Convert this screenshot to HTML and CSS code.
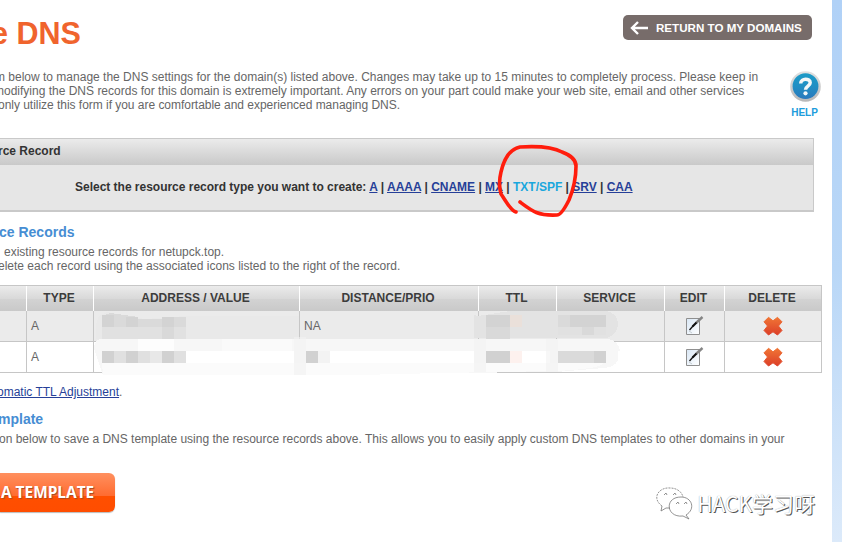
FILE: index.html
```html
<!DOCTYPE html>
<html lang="en">
<head>
<meta charset="utf-8">
<title>Manage DNS</title>
<link rel="stylesheet" href="styles.css">
</head>
<body>
<main class="page">
  <header class="top">
    <h1>e DNS</h1>
    <a class="return"><svg width="20" height="14" viewBox="0 0 20 14"><path d="M9 1L3 7l6 6M2.500 7H19" fill="none" stroke="#fff" stroke-width="2.400"/></svg><span>RETURN TO MY DOMAINS</span></a>
  </header>
  <section class="intro">
    <div class="copy">
      <p class="l1">m below to manage the DNS settings for the domain(s) listed above. Changes may take up to 15 minutes to completely process. Please keep in</p>
      <p class="l2">modifying the DNS records for this domain is extremely important. Any errors on your part could make your web site, email and other services</p>
      <p class="l3">only utilize this form if you are comfortable and experienced managing DNS.</p>
    </div>
    <a class="help">
      <svg width="32" height="32" viewBox="0 0 32 32"><defs><linearGradient id="hb" x2="0" y2="1"><stop stop-color="#1c9bc7"/><stop offset=".5" stop-color="#218fc4"/><stop offset="1" stop-color="#2b79bd"/></linearGradient><linearGradient id="hr" x2="0" y2="1"><stop stop-color="#e2e2e2"/><stop offset="1" stop-color="#b8b8b8"/></linearGradient></defs><circle cx="16.500" cy="15.500" r="15.300" fill="url(#hr)"/><circle cx="16.500" cy="15.200" r="12.900" fill="url(#hb)"/><path d="M11.700 12.500C11.800 6.700 21.200 6.900 21.200 11.800C21.200 15.200 16.500 15 16.500 18.700" fill="none" stroke="#f4f7f8" stroke-width="3.500"/><circle cx="16.500" cy="22.300" r="2.100" fill="#f4f7f8"/></svg>
      <span>HELP</span>
    </a>
  </section>
  <section class="panel">
    <h2>rce Record</h2>
    <div class="types">Select the resource record type you want to create: <a>A</a> | <a>AAAA</a> | <a>CNAME</a> | <a>MX</a> | <b>TXT/SPF</b> | <a>SRV</a> | <a>CAA</a></div>
    <svg class="circle" width="90" height="80" viewBox="0 0 90 80"><path d="M21 70C15 68 11 59 6 52C4 45 4 38 6 30C9 17 15 7 25 5C42 4 58 5 67 10C75 13 81 17 81 24C81 36 79 46 74 58C69 68 65 73 62 73C43 74 37 69 25 60" fill="none" stroke="#ff1d0d" stroke-width="3.600" stroke-linecap="round" stroke-linejoin="round"/></svg>
  </section>
  <section class="records">
    <h3>ce Records</h3>
    <p class="r1">existing resource records for netupck.top.</p>
    <p class="r2">elete each record using the associated icons listed to the right of the record.</p>
  </section>
  <div class="tablewrap">
    <table>
      <colgroup><col class="c0"><col class="c1"><col class="c2"><col class="c3"><col class="c4"><col class="c5"><col class="c6"><col class="c7"></colgroup>
      <thead><tr><th></th><th>TYPE</th><th>ADDRESS / VALUE</th><th>DISTANCE/PRIO</th><th>TTL</th><th>SERVICE</th><th>EDIT</th><th>DELETE</th></tr></thead>
      <tbody>
        <tr><td></td><td>A</td><td></td><td>NA</td><td></td><td></td>
          <td class="ico"><svg width="20" height="20" viewBox="0 0 20 20"><defs><linearGradient id="pg" x2="1" y2="1"><stop stop-color="#d9e7f5"/><stop offset="1" stop-color="#fff"/></linearGradient><g id="edit"><path d="M1.500 2.500h13v16h-13z" fill="url(#pg)" stroke="#8f8f8f"/><path d="M4 15l3 2" stroke="#c3cbd1" fill="none"/><path d="M4.500 14L8 10" stroke="#111" stroke-width="1.300"/><path d="M7.500 10.500L12 6" stroke="#111" stroke-width="2.200"/><path d="M11.500 6.500L17.500 1" stroke="#858585" stroke-width="2.400"/></g></defs><use href="#edit"/></svg></td>
          <td class="ico"><svg width="20" height="20" viewBox="0 0 20 20"><defs><linearGradient id="xg" x2="0" y2="1"><stop stop-color="#f07535"/><stop offset="1" stop-color="#dc3f28"/></linearGradient><path id="del" d="M5.500 1.300L10 4.800L14.500 1.300L19 5.800L15.500 10L19 14.500L14.500 19L10 15.800L5.500 19L1 14.500L4.500 10L1 5.800Z" fill="url(#xg)" stroke="url(#xg)" stroke-linejoin="round"/></defs><use href="#del"/></svg></td></tr>
        <tr><td></td><td>A</td><td></td><td></td><td></td><td></td>
          <td class="ico"><svg width="20" height="20" viewBox="0 0 20 20"><use href="#edit"/></svg></td>
          <td class="ico"><svg width="20" height="20" viewBox="0 0 20 20"><use href="#del"/></svg></td></tr>
      </tbody>
    </table>
    <svg class="mask" width="822" height="92" viewBox="0 285 822 92" shape-rendering="crispEdges">
      <path d="M99 316L107 312L145 319L186 316H299V339H96V325Z" fill="#e9e9e9"/>
      <path d="M102 316L110 313L138 317V327H102Z" fill="#dadada"/>
      <path d="M478 316L510 311H607Q618 314 618 324Q618 334 607 338H474V315Z" fill="#e3e3e3"/>
      <path d="M94 349Q94 339 102 339H605Q618 339 620 351H618V360Q615 367 604 368L556 372L440 373L360 375H103Z" fill="#f7f7f7"/>
      <path d="M102 363H604Q600 369 556 371L440 373L360 375H103Z" fill="#fbfbfb"/>
      <path d="M186 351H294V363H186ZM330 351H474V363H330ZM522 351H550V363H522Z" fill="#fff"/>
      <g fill="#dadada"><path d="M102 315h12v12h-12zM126 317h12v10h-12zM162 317h12v10h-12zM486 315h24v12h-24zM570 315h36v12h-36z" fill="#d3d3d3"/><path d="M114 317h12v10h-12zM138 319h24v8h-24zM174 317h12v10h-12zM558 315h12v12h-12z"/></g>
      <path d="M102 327h84v12h-84zM558 327h48v8h-48z" fill="#e1e1e1"/><path d="M162 327h12v12h-12zM486 327h24v12h-24zM582 327h12v8h-12z" fill="#d9d9d9"/>
      <path d="M138 339h36v12h-36z" fill="#fdfdfd"/><path d="M222 339h70v12h-70z" fill="#fafafa"/>
      <path d="M102 351h84v12h-84z" fill="#e0e0e0"/><path d="M102 351h12v12h-12zM126 351h12v12h-12zM162 351h12v12h-12zM306 351h12v12h-12zM486 351h24v12h-24zM594 351h12v12h-12z" fill="#d1d1d1"/><path d="M558 351h36v12h-36z" fill="#dadada"/><path d="M150 351h12v12h-12z" fill="#e8e8e8"/><path d="M318 351h12v12h-12z" fill="#f3f3f3"/>
      <path d="M510 315h12v12h-12z" fill="#eae0da"/><path d="M510 351h12v12h-12z" fill="#fdf1ee"/>
      <path d="M294 337h12v38h-12zM474 339h12v33h-12zM546 339h12v33h-12z" fill="#f2f2f2" opacity=".6"/>
    </svg>
  </div>
  <p class="ttl"><a>omatic TTL Adjustment</a>.</p>
  <h3 class="th">mplate</h3>
  <p class="tp">on below to save a DNS template using the resource records above. This allows you to easily apply custom DNS templates to other domains in your</p>
  <footer class="foot">
    <a class="orange">A TEMPLATE</a>
    <div class="mark"><svg width="38" height="34" viewBox="0 0 38 34" fill="none" stroke="#777" stroke-width=".8"><path d="M6 20C-5 12 3 1 14 2C21 2 26 6 27 11" stroke-dasharray="2 1"/><path d="M6 20L5 25L10 22H14"/><path d="M30 29C40 23 36 11 25 11C8 11 10 32 27 30L33 33Z"/><path d="M8 9l2-2l1 2M17 9l2-2l1 2M20 18l2-2l1 2M28 18l2-2l1 2"/></svg><span>HACK学习呀</span></div>
  </footer>
</main>
</body>
</html>
```
FILE: styles.css
```css
* { box-sizing: border-box; }
html, body { margin: 0; height: 542px; overflow: hidden; }
body { background: linear-gradient(#b0d1f7, #b9d7f7 50%, #dceafa); font: 12px/14px "Liberation Sans", Arial, sans-serif; color: #666; }
h1, h2, h3, p { margin: 0; white-space: nowrap; }
.page { width: 832px; height: 542px; background: #fff; overflow: hidden; }
.top { display: flex; justify-content: space-between; height: 70px; padding: 15px 20px 0 0; }
h1 { margin-left: -9px; font-size: 30.5px; line-height: 37px; color: #f0642d; }
.return { display: flex; align-items: center; gap: 7px; width: 189px; height: 25px; padding-left: 6px; border-radius: 5px; background: #776c6a; color: #fff; font: bold 11.6px/25px "Liberation Sans", Arial, sans-serif; white-space: nowrap; }
.intro { display: flex; justify-content: space-between; height: 68px; padding-right: 11px; }
.l1 { margin-left: -5px; }
.l2 { margin-left: -6px; }
.l3 { margin-left: -2px; letter-spacing: -.03px; }
.help { display: flex; flex-direction: column; align-items: center; width: 33px; padding-top: 1px; color: #209cdc; font-size: 10px; font-weight: bold; line-height: 20px; }
.help svg { flex: none; }
.panel { position: relative; width: 814px; height: 74px; background: #e6e6e6; border: solid #c9c9c9; border-width: 1px 1px 2px 0; }
.panel h2 { height: 26px; margin-left: -2px; font-size: 12px; line-height: 24px; font-weight: bold; color: #333; background: linear-gradient(#ebebeb, #c9c9c9); }
.types { margin: 15px 0 0 75px; font-weight: bold; color: #333; letter-spacing: -.015px; white-space: nowrap; }
.types a { color: #263f98; text-decoration: underline; }
.types b { color: #1aa7dd; }
.circle { position: absolute; left: 495px; top: 3px; }
.records { height: 73px; padding-top: 12px; }
h3 { font-size: 14px; line-height: 16px; color: #468dd3; }
.records h3 { margin: 0 0 5px -1px; }
.r1 { margin-left: 4px; }
.r2 { margin-left: -2px; }
.tablewrap { position: relative; height: 88px; }
table { width: 822px; table-layout: fixed; border-collapse: separate; border-spacing: 0; border-top: 1px solid #c6c6c6; }
.c0 { width: 27px; } .c1 { width: 67px; } .c2 { width: 206px; } .c3 { width: 179px; } .c4 { width: 78px; } .c5 { width: 108px; } .c6 { width: 60px; } .c7 { width: 97px; }
th { height: 25px; padding: 0 2px 2px 0; color: #3c3c3c; font-size: 12px; background: linear-gradient(#ebebeb, #d9d9d9 50%, #d3d3d3 51%, #c9c9c9); border-right: 1px solid #fff; }
th:last-child { border-color: #c6c6c6; }
td { height: 31px; padding: 0 5px 0 4px; border: solid #c6c6c6; border-width: 0 1px 1px 0; }
tbody tr:first-child { background: #ebebeb; }
.ico { text-align: center; padding: 0; }
.ico svg { display: block; margin: 0 auto; }
.mask { position: absolute; left: 0; top: 0; }
.ttl { margin: 12px 0 0 -3px; }
.ttl a { color: #263f98; text-decoration: underline; }
.th { margin: 12px 0 5px -2px; }
.tp { margin-left: -1px; }
.foot { display: flex; justify-content: space-between; padding: 27px 17px 0 0; }
.orange { width: 115px; height: 39px; padding-left: 1px; border-radius: 0 6px 6px 0; background: linear-gradient(#ff905f, #ff6b30 59%, #ff4f00 60%, #ff4d00); box-shadow: 0 1px 1px #bbb; color: #fff; font: bold 15.4px/39px "Open Sans", sans-serif; text-shadow: 1px 1px 1px #a84a20; white-space: nowrap; }
.mark { display: flex; align-items: center; gap: 3px; height: 36px; margin-top: 12px; }
.mark span { font: 21px/30px "Noto Sans CJK SC", sans-serif; color: #fff; text-shadow: 1px 1px 0 #555, 0 0 1px #999; white-space: nowrap; }
```
